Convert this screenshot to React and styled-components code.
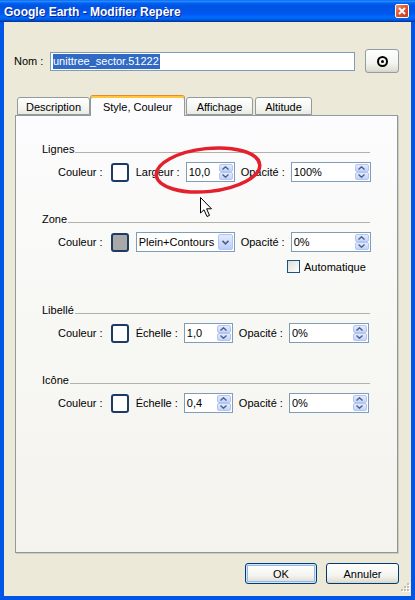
import React from 'react';
import styled, { createGlobalStyle } from 'styled-components';

const GlobalStyle = createGlobalStyle`
  html, body {
    margin: 0;
    padding: 0;
    background: #ECE9D8;
  }
  * {
    box-sizing: border-box;
  }
`;

const Window = styled.div`
  position: relative;
  width: 415px;
  height: 600px;
  display: flex;
  flex-direction: column;
  font-family: "Liberation Sans", Arial, sans-serif;
  font-size: 11px;
  color: #000;
  overflow: hidden;
`;

const TitleBar = styled.div`
  height: 22px;
  display: flex;
  align-items: center;
  justify-content: space-between;
  padding: 0 6px 0 4px;
  background: linear-gradient(to bottom, #0058EE 0%, #3593FF 5%, #127DFF 9%, #036FFC 12%, #0262EE 16%, #0057E5 22%, #0054E3 28%, #0055EB 56%, #005BF5 66%, #026AFE 76%, #0062EF 86%, #0052D6 92%, #0040AB 96%, #003092 100%);
`;

const Title = styled.div`
  color: #fff;
  font-weight: bold;
  font-size: 12px;
  text-shadow: 1px 1px 0 #0A1E8C;
  padding-top: 1px;
`;

const CloseButton = styled.div`
  width: 14px;
  height: 14px;
  border: 1px solid #fff;
  border-radius: 2px;
  background: linear-gradient(135deg, #F0937A 0%, #E2552F 45%, #C53C1B 100%);
  display: flex;
  align-items: center;
  justify-content: center;
`;

const Frame = styled.div`
  position: relative;
  flex: 1;
  display: flex;
  flex-direction: column;
  background: #ECE9D8;
  border: 4px solid #0055E5;
  border-top: none;
  padding: 27px 12px 0 10px;
`;

const NameRow = styled.div`
  display: flex;
  align-items: center;
  height: 24px;
`;

const NameLabel = styled.span`
  width: 36px;
  flex-shrink: 0;
  white-space: nowrap;
`;

const Label = styled.span`
  flex-shrink: 0;
  white-space: nowrap;
`;

const TextBox = styled.div`
  flex-shrink: 0;
  width: ${p => p.$w}px;
  height: ${p => p.$h || 20}px;
  border: 1px solid #7F9DB9;
  background: #fff;
  display: flex;
  align-items: center;
  padding: 0 1px 0 2px;
  white-space: nowrap;
`;

const Selected = styled.span`
  background: #316AC5;
  color: #fff;
  line-height: 15px;
  padding-right: 1px;
`;

const XPButton = styled.div`
  flex-shrink: 0;
  width: ${p => p.$w}px;
  height: ${p => p.$h}px;
  margin-left: ${p => p.$ml || 0}px;
  border: 1px solid ${p => p.$soft ? '#8F9DA8' : '#003C74'};
  border-radius: 3px;
  background: linear-gradient(to bottom, #FFFFFF 0%, #F4F4F0 60%, #E3E0D5 90%, #D6D0C5 100%);
  display: flex;
  align-items: center;
  justify-content: center;
  box-shadow: ${p => p.$default ? 'inset 0 0 0 1px #CEE7FF, inset 0 0 0 2px #98B8EA' : 'none'};
`;

const TargetIcon = styled.div`
  width: 11px;
  height: 11px;
  border: 2px solid #000;
  border-radius: 50%;
  display: flex;
  align-items: center;
  justify-content: center;
  &::after {
    content: '';
    width: 3px;
    height: 3px;
    border-radius: 50%;
    background: #000;
  }
`;

const TabStrip = styled.div`
  display: flex;
  align-items: flex-end;
  height: 20px;
  margin: 22px 0 0 3px;
`;

const Tab = styled.div`
  position: relative;
  z-index: ${p => p.$active ? 1 : 0};
  width: ${p => p.$w}px;
  height: ${p => p.$active ? 21 : 18}px;
  margin-left: ${p => p.$ml || 0}px;
  margin-bottom: ${p => p.$active ? -1 : 0}px;
  border: 1px solid #919B9C;
  border-bottom: ${p => p.$active ? 'none' : '1px solid #919B9C'};
  border-top-color: ${p => p.$active ? '#E68B2C' : '#919B9C'};
  border-radius: 3px 3px 0 0;
  background: ${p => p.$active ? '#FCFCFE' : 'linear-gradient(to bottom, #FFFFFF, #F3F3EF 70%, #E9E8E2)'};
  box-shadow: ${p => p.$active ? 'inset 0 2px 0 #FFC83C' : 'none'};
  display: flex;
  align-items: center;
  justify-content: center;
  padding-top: 1px;
  white-space: nowrap;
`;

const Panel = styled.div`
  margin-left: 1px;
  width: 383px;
  height: 438px;
  border: 1px solid #919B9C;
  border-right-color: #8E9798;
  border-bottom-color: #8E9798;
  background: linear-gradient(to bottom, #FCFCFE 0%, #F8F8F5 40%, #F4F3EE 100%);
  box-shadow: 1px 1px 0 #D0CDBF;
  padding: 27px 27px 0 26px;
  display: flex;
  flex-direction: column;
  gap: 31px;
`;

const Group = styled.div`
  display: flex;
  flex-direction: column;
  gap: 6px;
`;

const GroupHeader = styled.div`
  display: flex;
  align-items: flex-end;
  height: 13px;
  line-height: 13px;
`;

const HeaderLine = styled.div`
  flex: 1;
  height: 1px;
  margin: 0 0 3px 1px;
  background: #B4B2A8;
`;

const Row = styled.div`
  display: flex;
  align-items: center;
  height: 20px;
  margin-left: 16px;
  gap: 6px;
`;

const Swatch = styled.div`
  flex-shrink: 0;
  width: 18px;
  height: 19px;
  margin: 0 1px 0 2px;
  border: 2px solid #1D3C63;
  border-radius: 3px;
  background: ${p => p.$fill};
`;

const SpinColumn = styled.div`
  display: flex;
  flex-direction: column;
  margin-left: auto;
`;

const SpinBtn = styled.div`
  width: 14px;
  height: 8px;
  border: 1px solid #B3C6F2;
  border-radius: 2px;
  background: linear-gradient(to bottom, #E3EBFE, #C2D3FC);
  display: flex;
  align-items: center;
  justify-content: center;
`;

const DropBtn = styled.div`
  width: 15px;
  height: 16px;
  margin-left: auto;
  border: 1px solid #B3C6F2;
  border-radius: 2px;
  background: linear-gradient(to bottom, #E3EBFE, #BBCEFA);
  display: flex;
  align-items: center;
  justify-content: center;
`;

const CheckRow = styled.div`
  display: flex;
  align-items: center;
  gap: 4px;
  margin: 2px 0 0 245px;
  height: 13px;
`;

const CheckBox = styled.div`
  flex-shrink: 0;
  width: 13px;
  height: 13px;
  border: 1px solid #1C5180;
  background: linear-gradient(135deg, #DCDCD7, #FFFFFF);
`;

const Footer = styled.div`
  display: flex;
  justify-content: flex-end;
  gap: 9px;
  margin-top: 10px;
`;

const Grip = styled.svg`
  position: absolute;
  right: 1px;
  bottom: 2px;
`;

const Overlay = styled.svg`
  position: absolute;
  left: 0;
  top: 0;
  pointer-events: none;
`;

const Arrow = ({ up }) => (
  <svg width="7" height="4" viewBox="0 0 7 4">
    <polyline
      points={up ? '0.5,3.5 3.5,0.8 6.5,3.5' : '0.5,0.5 3.5,3.2 6.5,0.5'}
      fill="none"
      stroke="#4D6185"
      strokeWidth="1.4"
    />
  </svg>
);

const SpinBox = ({ value, w }) => (
  <TextBox $w={w}>
    <span>{value}</span>
    <SpinColumn>
      <SpinBtn><Arrow up /></SpinBtn>
      <SpinBtn><Arrow /></SpinBtn>
    </SpinColumn>
  </TextBox>
);

const Header = ({ children }) => (
  <GroupHeader>
    <Label>{children}</Label>
    <HeaderLine />
  </GroupHeader>
);

const App = () => (
  <Window>
    <GlobalStyle />
    <TitleBar>
      <Title>Google Earth - Modifier Repère</Title>
      <CloseButton>
        <svg width="8" height="8" viewBox="0 0 8 8">
          <path d="M1 1 L7 7 M7 1 L1 7" stroke="#fff" strokeWidth="2" />
        </svg>
      </CloseButton>
    </TitleBar>

    <Frame>
      <NameRow>
        <NameLabel>Nom :</NameLabel>
        <TextBox $w={305} $h={19}>
          <Selected>unittree_sector.51222</Selected>
        </TextBox>
        <XPButton $w={34} $h={24} $ml={10} $soft>
          <TargetIcon />
        </XPButton>
      </NameRow>

      <TabStrip>
        <Tab $w={73}>Description</Tab>
        <Tab $w={95} $active>Style, Couleur</Tab>
        <Tab $w={67} $ml={1}>Affichage</Tab>
        <Tab $w={57} $ml={2}>Altitude</Tab>
      </TabStrip>

      <Panel>
        <Group>
          <Header>Lignes</Header>
          <Row>
            <Label>Couleur :</Label>
            <Swatch $fill="#FFFFFF" />
            <Label>Largeur :</Label>
            <SpinBox value="10,0" w={49} />
            <Label>Opacité :</Label>
            <SpinBox value="100%" w={80} />
          </Row>
        </Group>

        <Group>
          <Header>Zone</Header>
          <Row>
            <Label>Couleur :</Label>
            <Swatch $fill="#A8A8A8" />
            <TextBox $w={99}>
              <span>Plein+Contours</span>
              <DropBtn>
                <svg width="7" height="5" viewBox="0 0 7 5">
                  <polyline points="0.5,0.8 3.5,3.8 6.5,0.8" fill="none" stroke="#4D6185" strokeWidth="1.6" />
                </svg>
              </DropBtn>
            </TextBox>
            <Label>Opacité :</Label>
            <SpinBox value="0%" w={80} />
          </Row>
          <CheckRow>
            <CheckBox />
            <Label>Automatique</Label>
          </CheckRow>
        </Group>

        <Group>
          <Header>Libellé</Header>
          <Row>
            <Label>Couleur :</Label>
            <Swatch $fill="#FFFFFF" />
            <Label>Échelle :</Label>
            <SpinBox value="1,0" w={49} />
            <Label>Opacité :</Label>
            <SpinBox value="0%" w={80} />
          </Row>
        </Group>

        <Group>
          <Header>Icône</Header>
          <Row>
            <Label>Couleur :</Label>
            <Swatch $fill="#FFFFFF" />
            <Label>Échelle :</Label>
            <SpinBox value="0,4" w={49} />
            <Label>Opacité :</Label>
            <SpinBox value="0%" w={80} />
          </Row>
        </Group>
      </Panel>

      <Footer>
        <XPButton $w={72} $h={21} $default>OK</XPButton>
        <XPButton $w={73} $h={21}>Annuler</XPButton>
      </Footer>

      <Grip width="12" height="12" viewBox="0 0 12 12">
        {[[9, 1], [6, 4], [9, 4], [3, 7], [6, 7], [9, 7]].map(([x, y]) => (
          <g key={`${x}-${y}`}>
            <rect x={x + 1} y={y + 1} width="2" height="2" fill="#FFFFFF" />
            <rect x={x} y={y} width="2" height="2" fill="#C1BEB2" />
          </g>
        ))}
      </Grip>
    </Frame>

    <Overlay width="415" height="600" viewBox="0 0 415 600">
      <ellipse
        cx="208"
        cy="170"
        rx="52"
        ry="21.5"
        transform="rotate(-6 208 170)"
        fill="none"
        stroke="#E3202B"
        strokeWidth="3.5"
      />
      <path
        d="M200.5 197.5 L200.5 213 L204 209.8 L207 216.5 L209.5 215.4 L206.6 208.8 L211.5 208.8 Z"
        fill="#FFFFFF"
        stroke="#000000"
        strokeWidth="1"
      />
    </Overlay>
  </Window>
);

export default App;
